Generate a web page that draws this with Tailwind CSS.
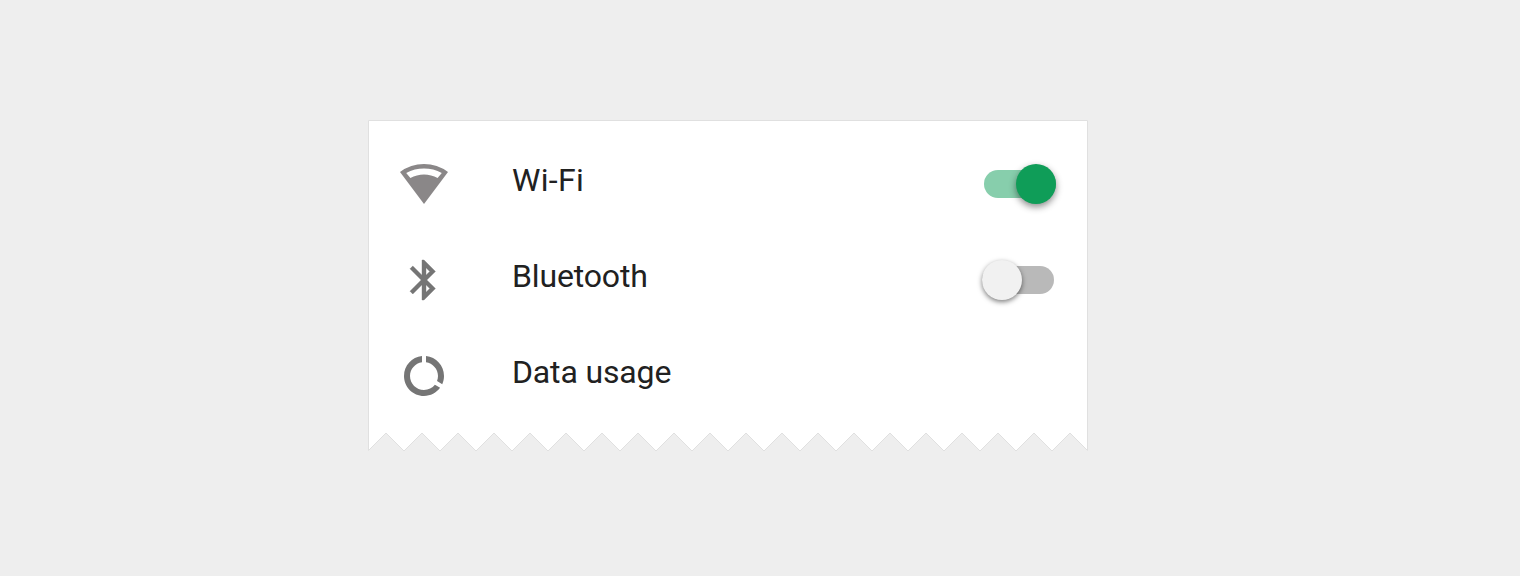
<!DOCTYPE html>
<html lang="en">
<head>
<meta charset="utf-8">
<title>Settings</title>
<script src="https://cdn.jsdelivr.net/npm/@tailwindcss/browser@4"></script>
</head>
<body class="h-screen overflow-hidden bg-[#eeeeee] pt-[120px] pl-[368px] font-['Roboto',sans-serif]">
<main class="relative h-[332px] w-[720px]">
  <!-- Card surface with a torn lower edge -->
  <svg class="absolute inset-0" width="720" height="332" viewBox="0 0 720 332" fill="none">
    <path id="card" fill="#fff" stroke="#e0e0e0" d=""/>
  </svg>
  <ul class="relative flex flex-col pt-4">
    <li class="flex h-24 items-center pr-8 pl-8">
      <svg class="size-12 shrink-0" viewBox="0 0 48 48" fill="#8a8788"><path fill-rule="evenodd" d="M24 44L0 12A40 40 0 0 1 48 12L24 44ZM6.200 13L10.400 18A28 28 0 0 1 37.600 18L41.800 13A38 38 0 0 0 6.200 13Z"/></svg>
      <span class="ml-16 flex-1 pb-2 text-[32px] leading-10 tracking-[0.3px] text-[#212121]">Wi-Fi</span>
      <div class="flex h-7 w-[72px] items-center justify-end rounded-full bg-[#87ceac]">
        <div class="size-10 rounded-full bg-[#0f9d58] shadow-[0_3px_7px_rgba(0,0,0,0.45)]"></div>
      </div>
    </li>
    <li class="flex h-24 items-center pr-[34px] pl-8">
      <svg class="size-12 shrink-0" viewBox="0 0 24 24" fill="#757575" stroke="#757575" stroke-width=".2"><path d="M17.710 7.710L12 2h-1v7.590L6.410 5 5 6.410 10.590 12 5 17.590 6.410 19 11 14.410V22h1l5.710-5.710-4.300-4.290 4.300-4.290zM13 5.830l1.880 1.880L13 9.590V5.830zm1.880 10.460L13 18.170v-3.760l1.880 1.880z"/></svg>
      <span class="ml-16 flex-1 pb-2 text-[32px] leading-10 tracking-[-0.15px] text-[#212121]">Bluetooth</span>
      <div class="flex h-7 w-[72px] items-center rounded-full bg-[#b9b9b9]">
        <div class="size-10 rounded-full bg-[#f1f1f1] shadow-[0_2px_5px_rgba(0,0,0,0.5)]"></div>
      </div>
    </li>
    <li class="flex h-24 items-center px-8">
      <svg class="size-12 shrink-0" viewBox="0 0 24 24" fill="#757575"><path d="M13 2.050v3.030c3.390.490 6 3.390 6 6.920 0 .900-.180 1.750-.480 2.540l2.600 1.530c.560-1.240.880-2.620.880-4.070 0-5.180-3.950-9.450-9-9.950zM12 19c-3.870 0-7-3.130-7-7 0-3.530 2.610-6.430 6-6.920V2.050c-5.060.500-9 4.760-9 9.950 0 5.520 4.470 10 9.990 10 3.310 0 6.240-1.610 8.060-4.090l-2.600-1.530C16.170 17.980 14.210 19 12 19z"/></svg>
      <span class="ml-16 flex-1 pb-2 text-[32px] leading-10 tracking-[-0.15px] text-[#212121]">Data usage</span>
    </li>
  </ul>
</main>
<script>
  let d = 'M.5 .5H719.5V330.500';
  for (let x = 702; x > 0; x -= 36) d += `L${x} 313L${x > 18 ? x - 18 : 0.5} ${x > 18 ? 331 : 330.5}`;
  document.getElementById('card').setAttribute('d', d + 'Z');
</script>
</body>
</html>
